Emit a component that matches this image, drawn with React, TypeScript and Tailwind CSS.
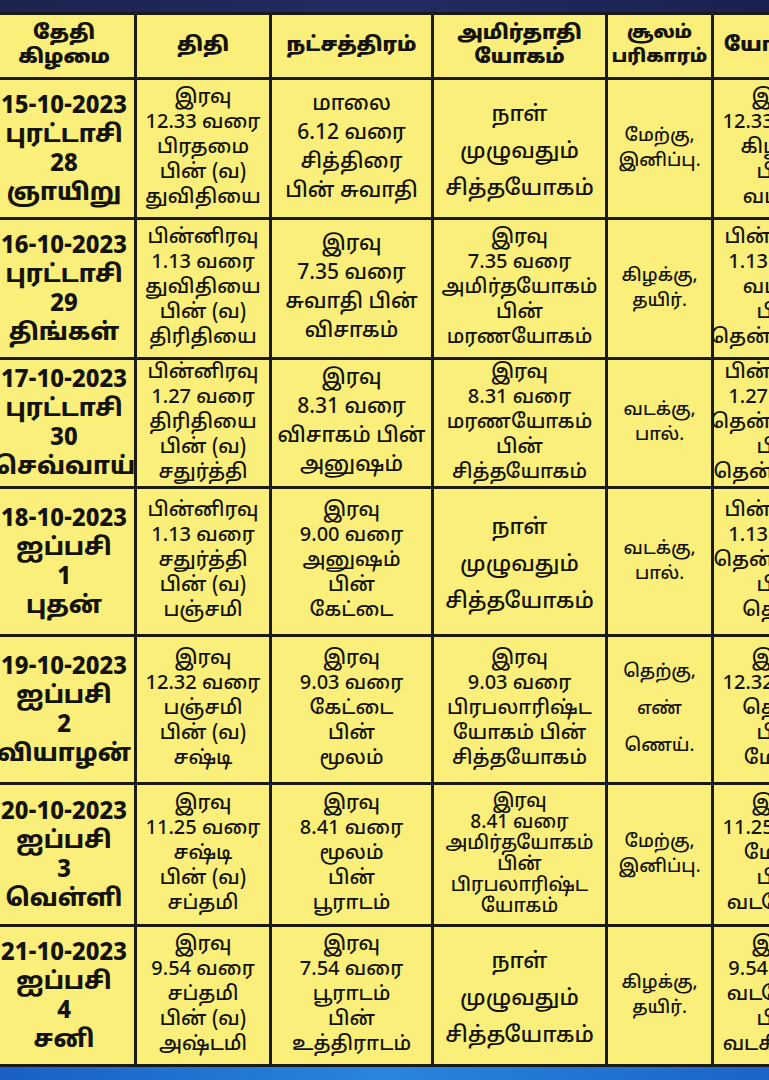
const tamil = "font-['Noto_Sans_Tamil','Lohit_Tamil','Noto_Sans','Liberation_Sans',sans-serif]"
const cols = "grid-cols-[140px_132px_159px_171px_103px_132px]"

type Row = {
  date: string[]
  thithi: string[]
  star: string[]
  yogam: string[]
  soolam: string[]
  last: string[]
  h: string
}

const rows: Row[] = [
  {
    date: ["15-10-2023", "புரட்டாசி", "28", "ஞாயிறு"],
    thithi: ["இரவு", "12.33 வரை", "பிரதமை", "பின் (வ)", "துவிதியை"],
    star: ["மாலை", "6.12 வரை", "சித்திரை", "பின் சுவாதி"],
    yogam: ["நாள்", "முழுவதும்", "சித்தயோகம்"],
    soolam: ["மேற்கு,", "இனிப்பு."],
    last: ["இரவு", "12.33 வரை", "கிழக்கு", "பின்", "வடக்கு"],
    h: "h-[137px]",
  },
  {
    date: ["16-10-2023", "புரட்டாசி", "29", "திங்கள்"],
    thithi: ["பின்னிரவு", "1.13 வரை", "துவிதியை", "பின் (வ)", "திரிதியை"],
    star: ["இரவு", "7.35 வரை", "சுவாதி பின்", "விசாகம்"],
    yogam: ["இரவு", "7.35 வரை", "அமிர்தயோகம்", "பின்", "மரணயோகம்"],
    soolam: ["கிழக்கு,", "தயிர்."],
    last: ["பின்னிரவு", "1.13 வரை", "வடக்கு", "பின்", "தென்கிழக்கு"],
    h: "h-[137px]",
  },
  {
    date: ["17-10-2023", "புரட்டாசி", "30", "செவ்வாய்"],
    thithi: ["பின்னிரவு", "1.27 வரை", "திரிதியை", "பின் (வ)", "சதுர்த்தி"],
    star: ["இரவு", "8.31 வரை", "விசாகம் பின்", "அனுஷம்"],
    yogam: ["இரவு", "8.31 வரை", "மரணயோகம்", "பின்", "சித்தயோகம்"],
    soolam: ["வடக்கு,", "பால்."],
    last: ["பின்னிரவு", "1.27 வரை", "தென்கிழக்கு", "பின்", "தென்மேற்கு"],
    h: "h-[126px]",
  },
  {
    date: ["18-10-2023", "ஐப்பசி", "1", "புதன்"],
    thithi: ["பின்னிரவு", "1.13 வரை", "சதுர்த்தி", "பின் (வ)", "பஞ்சமி"],
    star: ["இரவு", "9.00 வரை", "அனுஷம்", "பின்", "கேட்டை"],
    yogam: ["நாள்", "முழுவதும்", "சித்தயோகம்"],
    soolam: ["வடக்கு,", "பால்."],
    last: ["பின்னிரவு", "1.13 வரை", "தென்மேற்கு", "பின்", "தெற்கு"],
    h: "h-[145px]",
  },
  {
    date: ["19-10-2023", "ஐப்பசி", "2", "வியாழன்"],
    thithi: ["இரவு", "12.32 வரை", "பஞ்சமி", "பின் (வ)", "சஷ்டி"],
    star: ["இரவு", "9.03 வரை", "கேட்டை", "பின்", "மூலம்"],
    yogam: ["இரவு", "9.03 வரை", "பிரபலாரிஷ்ட", "யோகம் பின்", "சித்தயோகம்"],
    soolam: ["தெற்கு,", "எண்", "ணெய்."],
    last: ["இரவு", "12.32 வரை", "தெற்கு", "பின்", "மேற்கு"],
    h: "h-[145px]",
  },
  {
    date: ["20-10-2023", "ஐப்பசி", "3", "வெள்ளி"],
    thithi: ["இரவு", "11.25 வரை", "சஷ்டி", "பின் (வ)", "சப்தமி"],
    star: ["இரவு", "8.41 வரை", "மூலம்", "பின்", "பூராடம்"],
    yogam: ["இரவு", "8.41 வரை", "அமிர்தயோகம்", "பின்", "பிரபலாரிஷ்ட", "யோகம்"],
    soolam: ["மேற்கு,", "இனிப்பு."],
    last: ["இரவு", "11.25 வரை", "மேற்கு", "பின்", "வடமேற்கு"],
    h: "h-[139px]",
  },
  {
    date: ["21-10-2023", "ஐப்பசி", "4", "சனி"],
    thithi: ["இரவு", "9.54 வரை", "சப்தமி", "பின் (வ)", "அஷ்டமி"],
    star: ["இரவு", "7.54 வரை", "பூராடம்", "பின்", "உத்திராடம்"],
    yogam: ["நாள்", "முழுவதும்", "சித்தயோகம்"],
    soolam: ["கிழக்கு,", "தயிர்."],
    last: ["இரவு", "9.54 வரை", "வடமேற்கு", "பின்", "வடகிழக்கு"],
    h: "h-[137px]",
  },
]

// line spacing follows how many lines the cell holds
function leading(n: number) {
  if (n <= 2) return "leading-[25px]"
  if (n === 3) return "leading-[37px]"
  if (n === 4) return "leading-[29px]"
  if (n === 5) return "leading-[25px]"
  return "leading-[21px]"
}

function sized(n: number) {
  if (n === 3) return "text-[22px] pt-[8px]"
  if (n === 4) return "text-[21px]"
  if (n === 5) return "text-[20px]"
  return "text-[19px]"
}

function Cell({ lines, className = "" }: { lines: string[]; className?: string }) {
  return (
    <div className={`flex flex-col items-center justify-center bg-[#faef7a] text-center ${leading(lines.length)} ${className}`}>
      {lines.map((l, i) => (
        <span key={i} className="whitespace-nowrap">
          {l}
        </span>
      ))}
    </div>
  )
}

function Header({ lines, className = "text-[20px]" }: { lines: string[]; className?: string }) {
  return (
    <div className={`flex flex-col items-center justify-center bg-[#faef7a] text-center font-black leading-[24px] ${className}`}>
      {lines.map((l, i) => (
        <span key={i} className="whitespace-nowrap">
          {l}
        </span>
      ))}
    </div>
  )
}

export default function App() {
  return (
    <div className={`flex h-[1080px] w-[769px] flex-col overflow-hidden bg-[#faef7a] text-[#14130f] ${tamil}`}>
      <div className="h-[12px] shrink-0 bg-gradient-to-r from-[#1c2350] via-[#232b63] to-[#1a2150]" />
      <div className="-ml-[6px] flex flex-col gap-[3px] border-y-[3px] border-[#1b1a14] bg-[#1b1a14]">
        <div className={`grid h-[62px] ${cols} gap-[3px]`}>
          <Header lines={["தேதி", "கிழமை"]} />
          <Header lines={["திதி"]} />
          <Header lines={["நட்சத்திரம்"]} />
          <Header lines={["அமிர்தாதி", "யோகம்"]} />
          <Header lines={["சூலம்", "பரிகாரம்"]} className="text-[18px]" />
          <Header lines={["யோகினி"]} />
        </div>
        {rows.map((r) => (
          <div key={r.date[0]} className={`grid ${cols} gap-[3px] ${r.h}`}>
            <Cell lines={r.date} className="pt-[4px] text-[24px] font-extrabold leading-[29px]" />
            <Cell lines={r.thithi} className="text-[20px] font-medium" />
            <Cell lines={r.star} className={`${sized(r.star.length)} font-medium`} />
            <Cell lines={r.yogam} className={`${sized(r.yogam.length)} font-medium`} />
            <Cell lines={r.soolam} className="text-[18px] font-medium" />
            <Cell lines={r.last} className="text-[20px] font-medium" />
          </div>
        ))}
      </div>
      <div className="flex-1 bg-gradient-to-r from-[#1a5fc4] via-[#2a86dc] to-[#1c63c8]" />
    </div>
  )
}
